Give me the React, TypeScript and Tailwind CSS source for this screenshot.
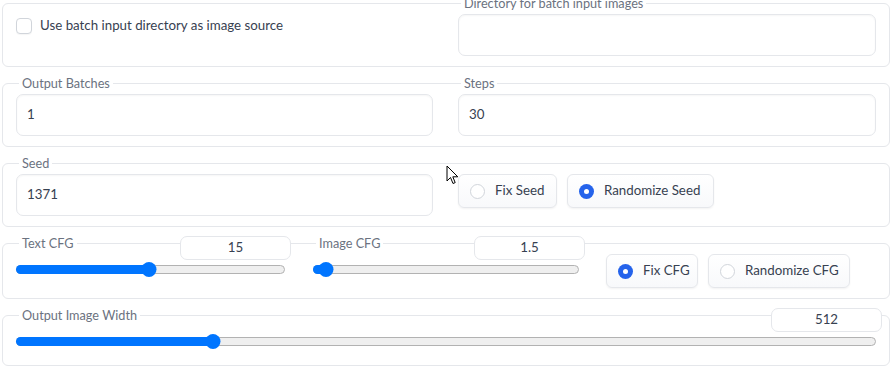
import React from 'react';

const font = { fontFamily: 'Lato, "Noto Sans", sans-serif' };

const Legend: React.FC<{ text: string }> = ({ text }) => (
    <div className="-mt-[8px] ml-[3px] w-fit bg-white px-[3px] text-[12.7px] leading-[14px] text-[#6b7280]">{text}</div>
);

const TextBox: React.FC<{ value?: string }> = ({ value }) => (
    <div className="mt-[4px] flex h-[42px] items-center rounded-[7px] border border-[#e5e7eb] bg-white px-[10px] text-[13.3px] text-[#374151] shadow-[inset_0_1px_2px_rgba(0,0,0,0.04)]">
        {value}
    </div>
);

const Radio: React.FC<{ label: string; checked?: boolean; w: string }> = ({ label, checked, w }) => (
    <div className={`flex h-[34px] items-center gap-[10px] rounded-[6px] border border-[#e5e7eb] bg-gradient-to-b from-white to-[#f8f9fb] pl-[11px] text-[13.3px] text-[#374151] shadow-[0_1px_2px_rgba(0,0,0,0.05)] ${w}`}>
        {checked ? (
            <span className="flex h-[15px] w-[15px] items-center justify-center rounded-full bg-[#2563eb]">
                <span className="h-[5px] w-[5px] rounded-full bg-white" />
            </span>
        ) : (
            <span className="h-[15px] w-[15px] rounded-full border border-[#d1d5db] bg-white" />
        )}
        <span>{label}</span>
    </div>
);

const Slider: React.FC<{ label: string; value: string; pct: number }> = ({ label, value, pct }) => (
    <div className="flex w-full flex-col">
        <div className="-mt-[8px] flex items-start justify-between">
            <div className="ml-[3px] bg-white px-[3px] text-[12.7px] leading-[14px] text-[#6b7280]">{label}</div>
            <div className="flex h-[24px] w-[111px] items-center justify-center rounded-[7px] border border-[#e5e7eb] bg-white text-[13.3px] text-[#374151]">
                {value}
            </div>
        </div>
        <div className="relative mr-[6px] mt-[5px] h-[9px]">
            <div className="absolute inset-0 rounded-full border border-[#b2b2b2] bg-[#efefef]" />
            <div className="absolute left-0 top-0 h-[9px] rounded-full bg-[#0075ff]" style={{ width: `${pct}%` }} />
            <div
                className="absolute top-[-3px] h-[15px] w-[15px] -translate-x-1/2 rounded-full bg-[#0075ff]"
                style={{ left: `${pct}%` }}
            />
        </div>
    </div>
);

const Row: React.FC<{ children: React.ReactNode; className?: string }> = ({ children, className = '' }) => (
    <div className={`rounded-[6px] border border-[#e5e7eb] ${className}`}>{children}</div>
);

export default function App() {
    return (
        <div className="relative h-[373px] w-[896px] overflow-hidden bg-white pl-[2px] pt-[3px]" style={font}>
            <div className="flex w-[888px] flex-col gap-[16px]">
                {/* batch directory */}
                <Row className="grid grid-cols-[417px_418px] gap-[25px] px-[13px] pb-[10px]">
                    <div className="mt-[12px] flex items-center gap-[8px] self-start">
                        <span className="h-[16px] w-[16px] rounded-[4px] border border-[#d1d5db] bg-white shadow-[0_1px_1px_rgba(0,0,0,0.04)]" />
                        <span className="text-[13.3px] text-[#374151]">Use batch input directory as image source</span>
                    </div>
                    <div>
                        <Legend text="Directory for batch input images" />
                        <TextBox />
                    </div>
                </Row>

                {/* batches / steps */}
                <Row className="grid grid-cols-[417px_418px] gap-[25px] px-[13px] pb-[10px]">
                    <div>
                        <Legend text="Output Batches" />
                        <TextBox value="1" />
                    </div>
                    <div>
                        <Legend text="Steps" />
                        <TextBox value="30" />
                    </div>
                </Row>

                {/* seed */}
                <Row className="grid grid-cols-[417px_418px] gap-[25px] px-[13px] pb-[10px]">
                    <div>
                        <Legend text="Seed" />
                        <TextBox value="1371" />
                    </div>
                    <div className="mt-[10px] flex gap-[10px]">
                        <Radio label="Fix Seed" w="w-[99px]" />
                        <Radio label="Randomize Seed" checked w="w-[147px]" />
                    </div>
                </Row>

                {/* cfg */}
                <Row className="flex items-start pb-[10px] pl-[13px]">
                    <div className="w-[275px]">
                        <Slider label="Text CFG" value="15" pct={49.3} />
                    </div>
                    <div className="ml-[22px] w-[272px]">
                        <Slider label="Image CFG" value="1.5" pct={4.9} />
                    </div>
                    <div className="ml-[21px] mt-[10px] flex gap-[10px]">
                        <Radio label="Fix CFG" checked w="w-[92px]" />
                        <Radio label="Randomize CFG" w="w-[142px]" />
                    </div>
                </Row>

                {/* width */}
                <Row className="pb-[19px] pl-[13px] pr-[7px]">
                    <Slider label="Output Image Width" value="512" pct={22.9} />
                </Row>
            </div>

            {/* mouse pointer */}
            <svg className="absolute left-[446px] top-[165px]" width="14" height="21" viewBox="0 0 14 21">
                <path d="M1 1 L1 16 L4.5 12.5 L7 18.5 L9.2 17.6 L6.8 11.8 L11.8 11.8 Z" fill="white" stroke="black" strokeWidth="1" strokeLinejoin="round" />
            </svg>
        </div>
    );
}
